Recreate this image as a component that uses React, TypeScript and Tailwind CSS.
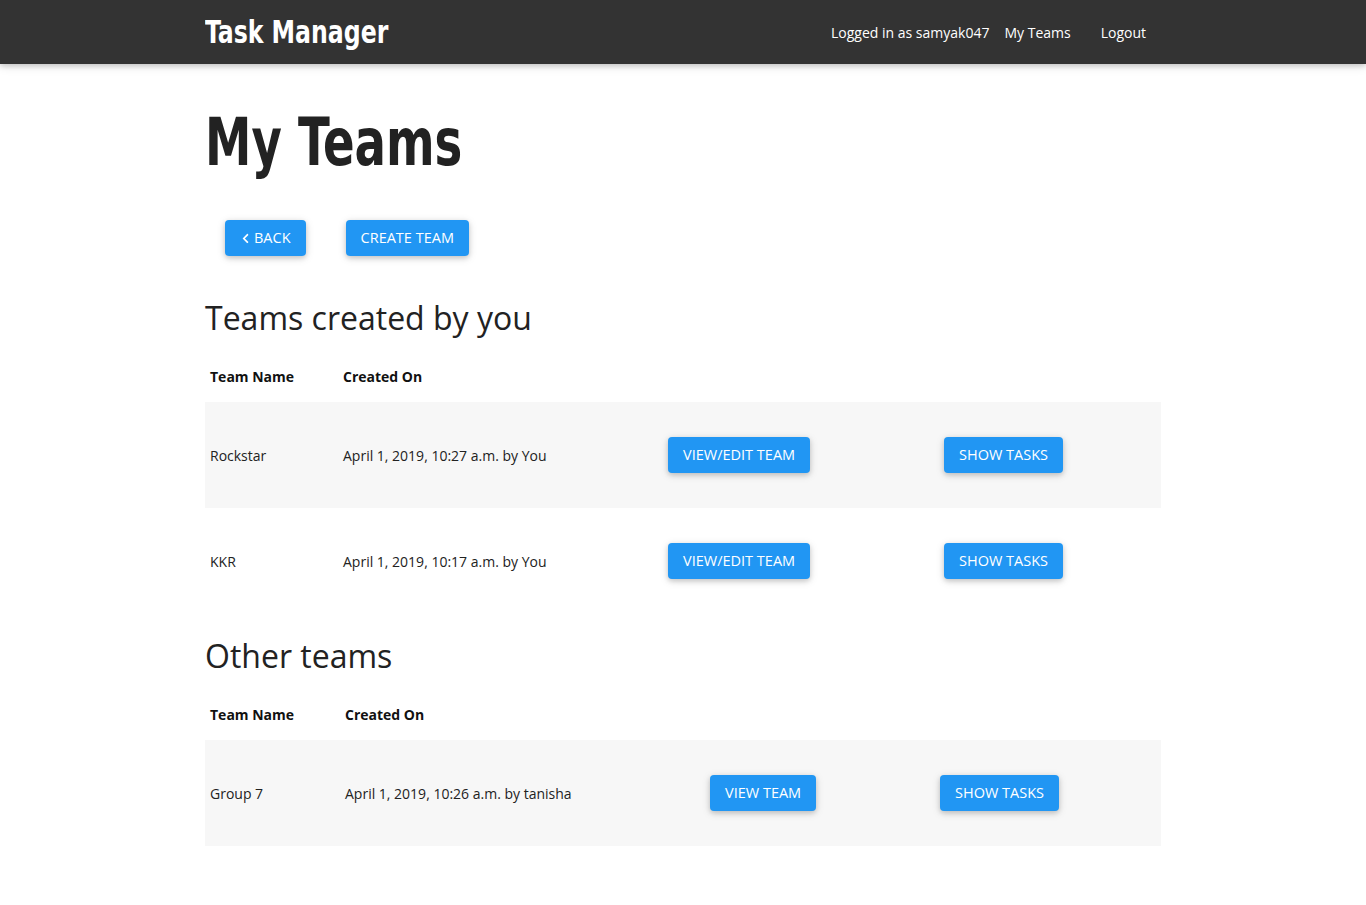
import { FaChevronLeft } from "react-icons/fa";

const heading = { fontFamily: '"DejaVu Sans Condensed", "DejaVu Sans", sans-serif', fontStretch: "condensed" };
const body = { fontFamily: '"Open Sans", "Noto Sans", sans-serif' };

const btn =
  "inline-flex h-9 items-center rounded-[4px] bg-[#2196f3] px-[15px] text-[14.5px] uppercase text-white shadow-[0_2px_5px_0_rgba(0,0,0,0.16),0_2px_10px_0_rgba(0,0,0,0.12)]";

type Team = { name: string; created: string; action: string };

const mine: Team[] = [
  { name: "Rockstar", created: "April 1, 2019, 10:27 a.m. by You", action: "View/Edit Team" },
  { name: "KKR", created: "April 1, 2019, 10:17 a.m. by You", action: "View/Edit Team" },
];

const others: Team[] = [
  { name: "Group 7", created: "April 1, 2019, 10:26 a.m. by tanisha", action: "View Team" },
];

const TeamTable = ({ teams, cols }: { teams: Team[]; cols: string }) => {
  return (
    <div className="mt-[10px]">
      <div className={`grid h-[52px] items-center ${cols} text-[14px] font-bold text-[#111]`}>
        <div className="pl-[5px]">Team Name</div>
        <div className="pl-[5px]">Created On</div>
        <div />
        <div />
      </div>
      {teams.map((t, key) => (
        <div
          key={key}
          className={`grid h-[106px] items-center ${cols} text-[14px] text-[#222] ${key % 2 === 0 ? "bg-[#f7f7f7]" : ""}`}
        >
          <div className="pl-[5px]">{t.name}</div>
          <div className="pl-[5px]">{t.created}</div>
          <div className="pl-[5px]">
            <button className={btn}>{t.action}</button>
          </div>
          <div className="pl-[5px]">
            <button className={btn}>Show Tasks</button>
          </div>
        </div>
      ))}
    </div>
  );
};

const App = () => {
  return (
    <div className="min-h-[905px] bg-white" style={body}>
      <nav className="h-16 bg-[#333] shadow-[0_2px_5px_0_rgba(0,0,0,0.16),0_2px_10px_0_rgba(0,0,0,0.12)]">
        <div className="mx-auto flex h-full w-[956px] items-center justify-between">
          <span className="origin-left scale-x-[0.82] text-[32px] font-bold text-white" style={heading}>
            Task Manager
          </span>
          <div className="flex items-center pr-[15px] text-[14px] text-white">
            <span>Logged in as samyak047</span>
            <span className="ml-[15px]">My Teams</span>
            <span className="ml-[30px]">Logout</span>
          </div>
        </div>
      </nav>

      <main className="mx-auto w-[956px] pb-10 text-[#222]">
        <h1
          className="mt-10 origin-left scale-x-[0.785] text-[66px] font-bold leading-[77px] text-[#222]"
          style={heading}
        >
          My Teams
        </h1>

        <div className="mt-[39px] flex gap-10 pl-5">
          <button className={btn}>
            <FaChevronLeft className="mr-[3px] h-[11px] w-[11px]" />
            Back
          </button>
          <button className={btn}>Create Team</button>
        </div>

        <h2 className="mt-10 text-[32px] leading-[44px] text-[#222]">Teams created by you</h2>
        <TeamTable teams={mine} cols="grid-cols-[133px_325px_276px_1fr]" />

        <h2 className="mt-5 text-[32px] leading-[44px] text-[#222]">Other teams</h2>
        <TeamTable teams={others} cols="grid-cols-[135px_365px_230px_1fr]" />
      </main>
    </div>
  );
};

export default App;
